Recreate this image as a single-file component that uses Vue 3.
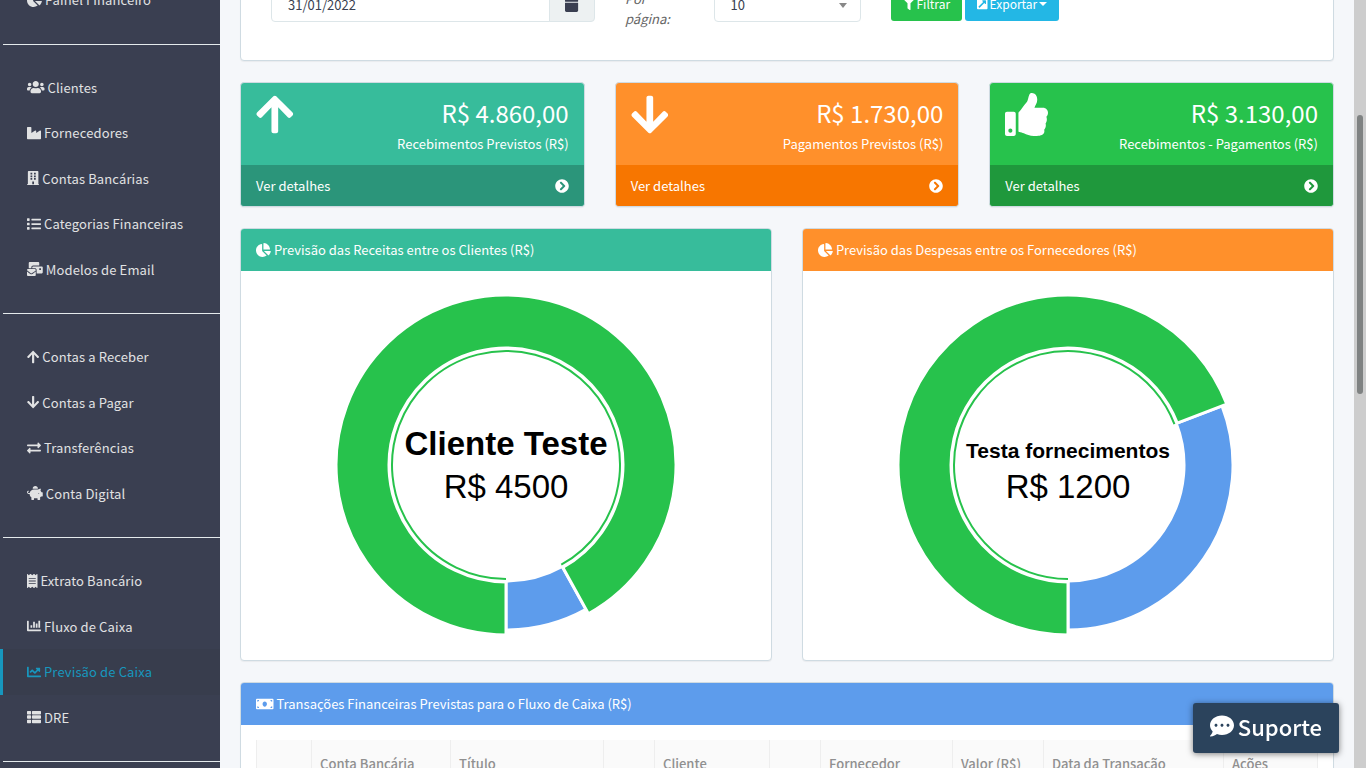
<template>
  <div class="app">
    <aside class="sidebar">
      <nav class="menu" aria-label="Menu">
        <ul v-for="(group, i) in menu" :key="i" class="menu-group">
          <li v-for="item in group" :key="item.label">
            <a href="#" class="menu-link" :class="{ active: item.active }">
              <Icon :name="item.icon" />
              <span>{{ item.label }}</span>
            </a>
          </li>
        </ul>
      </nav>
    </aside>

    <main class="content">
      <form class="card filters" @submit.prevent>
        <div class="date-group">
          <input v-model="endDate" class="date-input" type="text" aria-label="Data final" />
          <button class="date-button" type="button" aria-label="Abrir calendário">
            <Icon name="calendar" />
          </button>
        </div>
        <label class="per-page-label" for="per-page">Por página:</label>
        <div class="per-page">
          <select id="per-page" v-model="perPage">
            <option>10</option>
            <option>25</option>
            <option>50</option>
          </select>
        </div>
        <div class="actions">
          <button class="btn btn-success" type="submit"><Icon name="filter" />Filtrar</button>
          <button class="btn btn-info" type="button">
            <Icon name="external" />Exportar<span class="caret"></span>
          </button>
        </div>
      </form>

      <section class="summary">
        <article v-for="box in summary" :key="box.label" class="card box" :class="box.color">
          <div class="box-body">
            <Icon :name="box.icon" class="box-icon" />
            <div class="box-text">
              <div class="box-value">{{ box.value }}</div>
              <div class="box-label">{{ box.label }}</div>
            </div>
          </div>
          <a href="#" class="box-footer">
            <span>Ver detalhes</span>
            <Icon name="chevron" />
          </a>
        </article>
      </section>

      <section class="charts">
        <article v-for="chart in charts" :key="chart.title" class="card">
          <h2 class="card-header" :class="chart.color"><Icon name="pie" />{{ chart.title }}</h2>
          <div class="card-body">
            <svg class="donut" viewBox="-180 -179 360 359" role="img" :aria-label="chart.title">
              <path class="slice-rest" :d="slice(116, 165, 360 - chart.rest, 360)" />
              <path class="slice-main" :d="slice(117, 170, 0, 360 - chart.rest)" />
              <path class="slice-ring" :d="arc(114, 0, 360 - chart.rest)" />
              <text class="donut-name" :class="{ small: chart.small }" :y="chart.small ? -7 : -10">{{ chart.name }}</text>
              <text class="donut-value" y="33">{{ chart.value }}</text>
            </svg>
          </div>
        </article>
      </section>

      <section class="card">
        <h2 class="card-header blue">
          <Icon name="money" />Transações Financeiras Previstas para o Fluxo de Caixa (R$)
        </h2>
        <div class="card-body">
          <table class="transactions">
            <colgroup>
              <col v-for="(col, i) in columns" :key="i" :style="{ width: (col.width / totalWidth) * 100 + '%' }" />
            </colgroup>
            <thead>
              <tr>
                <th v-for="(col, i) in columns" :key="i" scope="col">{{ col.label }}</th>
              </tr>
            </thead>
          </table>
        </div>
      </section>
    </main>

    <div class="scrollbar"><div class="thumb"></div></div>

    <button class="support" type="button"><Icon name="comment" />Suporte</button>
  </div>
</template>

<script setup>
import { ref, h } from 'vue'

const endDate = ref('31/01/2022')
const perPage = ref('10')

// [largura do viewBox, caminho]
const icons = {
  pie: [544, 'M527.79 288H290.5l158.03 158.03c6.04 6.04 15.98 6.53 22.19.68 38.7-36.46 65.32-85.61 73.13-140.86 1.34-9.46-6.51-17.85-16.06-17.85zm-15.83-64.8C503.72 103.74 408.26 8.28 288.8.04 279.68-.59 272 7.1 272 16.24V240h223.77c9.14 0 16.82-7.68 16.19-16.8zM224 288V50.71c0-9.55-8.39-17.4-17.84-16.06C86.99 51.49-4.1 155.6.14 280.37 4.5 408.51 114.83 513.59 243.03 511.98c50.4-.63 96.97-16.87 135.26-44.03 7.9-5.6 8.42-17.23 1.57-24.08L224 288z'],
  users: [640, 'M96 224c35.3 0 64-28.7 64-64s-28.7-64-64-64-64 28.7-64 64 28.7 64 64 64zm448 0c35.3 0 64-28.7 64-64s-28.7-64-64-64-64 28.7-64 64 28.7 64 64 64zm32 32h-64c-17.6 0-33.5 7.1-45.1 18.6 40.3 22.1 68.9 62 75.1 109.4h66c17.7 0 32-14.3 32-32v-32c0-35.3-28.7-64-64-64zm-256 0c61.9 0 112-50.1 112-112S381.9 32 320 32 208 82.1 208 144s50.1 112 112 112zm76.8 32h-8.3c-20.8 10-43.9 16-68.5 16s-47.6-6-68.5-16h-8.3C179.6 288 128 339.6 128 403.2V432c0 26.5 21.5 48 48 48h288c26.5 0 48-21.5 48-48v-28.8c0-63.6-51.6-115.2-115.2-115.2zm-223.7-13.4C161.5 263.1 145.6 256 128 256H64c-35.3 0-64 28.7-64 64v32c0 17.7 14.3 32 32 32h65.9c6.3-47.4 34.9-87.3 75.2-109.4z'],
  industry: [512, 'M475.115 163.781L336 252.309v-68.28c0-18.916-20.931-30.399-36.885-20.248L160 252.309V56c0-13.255-10.745-24-24-24H24C10.745 32 0 42.745 0 56v400c0 13.255 10.745 24 24 24h464c13.255 0 24-10.745 24-24V184.029c0-18.917-20.931-30.399-36.885-20.248z'],
  building: [448, 'M436 480h-20V24c0-13.255-10.745-24-24-24H56C42.745 0 32 10.745 32 24v456H12c-6.627 0-12 5.373-12 12v20h448v-20c0-6.627-5.373-12-12-12zM128 64h64v64h-64zM256 64h64v64h-64zM128 160h64v64h-64zM256 160h64v64h-64zM128 256h64v64h-64zM256 256h64v64h-64zM192 384h64v96h-64z'],
  list: [512, 'M80 368H16a16 16 0 0 0-16 16v64a16 16 0 0 0 16 16h64a16 16 0 0 0 16-16v-64a16 16 0 0 0-16-16zm0-320H16A16 16 0 0 0 0 64v64a16 16 0 0 0 16 16h64a16 16 0 0 0 16-16V64a16 16 0 0 0-16-16zm0 160H16a16 16 0 0 0-16 16v64a16 16 0 0 0 16 16h64a16 16 0 0 0 16-16v-64a16 16 0 0 0-16-16zm416 176H176a16 16 0 0 0-16 16v32a16 16 0 0 0 16 16h320a16 16 0 0 0 16-16v-32a16 16 0 0 0-16-16zm0-320H176a16 16 0 0 0-16 16v32a16 16 0 0 0 16 16h320a16 16 0 0 0 16-16V80a16 16 0 0 0-16-16zm0 160H176a16 16 0 0 0-16 16v32a16 16 0 0 0 16 16h320a16 16 0 0 0 16-16v-32a16 16 0 0 0-16-16z'],
  mail: [576, 'M160 448c-25.6 0-51.2-22.4-64-32-64-44.8-83.2-60.8-96-70.4V480c0 17.67 14.33 32 32 32h256c17.67 0 32-14.33 32-32V345.6c-12.8 9.6-32 25.6-96 70.4-12.8 9.6-38.4 32-64 32zm128-192H32c-17.67 0-32 14.33-32 32v16c25.6 19.2 22.4 19.2 115.2 86.4 9.6 6.4 28.8 25.6 44.8 25.6s35.2-19.2 44.8-22.4c92.8-67.2 89.6-67.2 115.2-86.4V288c0-17.67-14.33-32-32-32zm256-96H224c-17.67 0-32 14.33-32 32v32h96c33.21 0 60.59 25.42 63.71 57.82l.29-.22V416h192c17.67 0 32-14.33 32-32V192c0-17.67-14.33-32-32-32zm-32 128h-64v-64h64v64zm-352-96c0-35.29 28.71-64 64-64h224V32c0-17.67-14.33-32-32-32H96C78.33 0 64 14.33 64 32v192h96v-32z'],
  up: [448, 'M34.9 289.5l-22.2-22.2c-9.4-9.4-9.4-24.6 0-33.9L207 39c9.4-9.4 24.6-9.4 33.9 0l194.3 194.3c9.4 9.4 9.4 24.6 0 33.9L413 289.4c-9.5 9.5-25 9.3-34.3-.4L264 168.6V456c0 13.3-10.7 24-24 24h-32c-13.3 0-24-10.7-24-24V168.6L69.2 289.1c-9.3 9.8-24.8 10-34.3.4z'],
  down: [448, 'M413.1 222.5l22.2 22.2c9.4 9.4 9.4 24.6 0 33.9L241 473c-9.4 9.4-24.6 9.4-33.9 0L12.7 278.6c-9.4-9.4-9.4-24.6 0-33.9l22.2-22.2c9.5-9.5 25-9.3 34.3.4L184 343.4V56c0-13.3 10.7-24 24-24h32c13.3 0 24 10.7 24 24v287.4l114.8-120.5c9.3-9.8 24.8-10 34.3-.4z'],
  exchange: [512, 'M0 168v-16c0-13.255 10.745-24 24-24h360V80c0-21.367 25.899-32.042 40.971-16.971l80 80c9.372 9.373 9.372 24.569 0 33.941l-80 80C409.956 271.982 384 261.456 384 240v-48H24c-13.255 0-24-10.745-24-24zm488 152H128v-48c0-21.314-25.862-32.08-40.971-16.971l-80 80c-9.372 9.373-9.372 24.569 0 33.941l80 80C102.057 463.997 128 453.437 128 432v-48h360c13.255 0 24-10.745 24-24v-16c0-13.255-10.745-24-24-24z'],
  piggy: [576, 'M560 224h-29.5c-8.8-20-21.6-37.7-37.4-52.5L512 96h-32c-29.4 0-55.4 13.5-73 34.3-7.6-1.1-15.1-2.3-23-2.3H256c-77.4 0-141.9 55-156.8 128H56c-14.8 0-26.5-13.5-23.5-28.8C34.7 215.8 45.4 208 57 208h1c3.3 0 6-2.7 6-6v-20c0-3.3-2.7-6-6-6-28.5 0-53.9 20.4-57.5 48.6C-3.9 258.8 22.7 288 56 288h40c0 52.2 25.4 98.1 64 127.3V496c0 8.8 7.2 16 16 16h64c8.8 0 16-7.2 16-16v-48h128v48c0 8.8 7.2 16 16 16h64c8.8 0 16-7.2 16-16v-80.7c11.8-8.9 22.3-19.4 31.3-31.3H560c8.8 0 16-7.2 16-16V240c0-8.8-7.2-16-16-16zm-128 64c-8.8 0-16-7.2-16-16s7.2-16 16-16 16 7.2 16 16-7.2 16-16 16zM256 96h128c5.4 0 10.7.4 15.9.8 0-.3.1-.5.1-.8 0-53-43-96-96-96s-96 43-96 96c0 2.1.5 4.1.6 6.2 15.2-3.9 31-6.2 47.4-6.2z'],
  receipt: [384, 'M358.4 3.2L320 48 265.6 3.2a15.9 15.9 0 0 0-19.2 0L192 48 137.6 3.2a15.9 15.9 0 0 0-19.2 0L64 48 25.6 3.2C15-4.7 0 2.8 0 16v480c0 13.2 15 20.7 25.6 12.8L64 464l54.4 44.8a15.9 15.9 0 0 0 19.2 0L192 464l54.4 44.8a15.9 15.9 0 0 0 19.2 0L320 464l38.4 44.8c10.5 7.9 25.6.4 25.6-12.8V16c0-13.2-15-20.7-25.6-12.8zM64 336h256v32H64zM64 240h256v32H64zM64 144h256v32H64z'],
  bars: [512, 'M332.8 320h38.4c6.4 0 12.8-6.4 12.8-12.8V172.8c0-6.4-6.4-12.8-12.8-12.8h-38.4c-6.4 0-12.8 6.4-12.8 12.8v134.4c0 6.4 6.4 12.8 12.8 12.8zm96 0h38.4c6.4 0 12.8-6.4 12.8-12.8V76.8c0-6.4-6.4-12.8-12.8-12.8h-38.4c-6.4 0-12.8 6.4-12.8 12.8v230.4c0 6.4 6.4 12.8 12.8 12.8zm-288 0h38.4c6.4 0 12.8-6.4 12.8-12.8v-70.4c0-6.4-6.4-12.8-12.8-12.8h-38.4c-6.4 0-12.8 6.4-12.8 12.8v70.4c0 6.4 6.4 12.8 12.8 12.8zm96 0h38.4c6.4 0 12.8-6.4 12.8-12.8V108.8c0-6.4-6.4-12.8-12.8-12.8h-38.4c-6.4 0-12.8 6.4-12.8 12.8v198.4c0 6.4 6.4 12.8 12.8 12.8zM496 384H64V80c0-8.84-7.16-16-16-16H16C7.16 64 0 71.16 0 80v336c0 17.67 14.33 32 32 32h464c8.84 0 16-7.16 16-16v-32c0-8.84-7.16-16-16-16z'],
  line: [512, 'M496 384H64V80c0-8.84-7.16-16-16-16H16C7.16 64 0 71.16 0 80v336c0 17.67 14.33 32 32 32h464c8.84 0 16-7.16 16-16v-32c0-8.84-7.16-16-16-16zM464 96H345.94c-21.38 0-32.09 25.85-16.97 40.97l32.4 32.4L288 242.75l-73.37-73.37c-12.5-12.5-32.76-12.5-45.25 0l-68.69 68.69c-6.25 6.25-6.25 16.38 0 22.63l22.62 22.62c6.25 6.25 16.38 6.25 22.63 0L192 237.25l73.37 73.37c12.5 12.5 32.76 12.5 45.25 0l96-96 32.4 32.4c15.12 15.12 40.97 4.41 40.97-16.97V112c.01-8.84-7.15-16-15.99-16z'],
  table: [512, 'M149.333 216v80c0 13.255-10.745 24-24 24H24c-13.255 0-24-10.745-24-24v-80c0-13.255 10.745-24 24-24h101.333c13.255 0 24 10.745 24 24zM0 376v80c0 13.255 10.745 24 24 24h101.333c13.255 0 24-10.745 24-24v-80c0-13.255-10.745-24-24-24H24c-13.255 0-24 10.745-24 24zM125.333 32H24C10.745 32 0 42.745 0 56v80c0 13.255 10.745 24 24 24h101.333c13.255 0 24-10.745 24-24V56c0-13.255-10.745-24-24-24zm80 448H488c13.255 0 24-10.745 24-24v-80c0-13.255-10.745-24-24-24H205.333c-13.255 0-24 10.745-24 24v80c0 13.255 10.745 24 24 24zm-24-424v80c0 13.255 10.745 24 24 24H488c13.255 0 24-10.745 24-24V56c0-13.255-10.745-24-24-24H205.333c-13.255 0-24 10.745-24 24zm24 264H488c13.255 0 24-10.745 24-24v-80c0-13.255-10.745-24-24-24H205.333c-13.255 0-24 10.745-24 24v80c0 13.255 10.745 24 24 24z'],
  thumb: [512, 'M104 224H24c-13.255 0-24 10.745-24 24v240c0 13.255 10.745 24 24 24h80c13.255 0 24-10.745 24-24V248c0-13.255-10.745-24-24-24zM64 472c-13.255 0-24-10.745-24-24s10.745-24 24-24 24 10.745 24 24-10.745 24-24 24zM384 81.452c0 42.416-25.97 66.208-33.277 94.548h101.723c33.397 0 59.397 27.746 59.553 58.098.084 17.938-7.546 37.249-19.439 49.197l-.11.11c9.836 23.337 8.237 56.037-9.308 79.469 8.681 25.895-.069 57.704-16.382 74.757 4.298 17.598 2.244 32.575-6.148 44.632C440.202 511.587 389.616 512 346.839 512l-2.845-.001c-48.287-.017-87.806-17.598-119.56-31.725-15.957-7.099-36.821-15.887-52.651-16.178-6.54-.12-11.783-5.457-11.783-11.998v-213.77c0-3.2 1.282-6.271 3.558-8.521 39.614-39.144 56.648-80.587 89.117-113.111 14.804-14.832 20.188-37.236 25.393-58.902C282.515 39.293 291.817 0 312 0c24 0 72 8 72 81.452z'],
  chevron: [512, 'M256 8c137 0 248 111 248 248S393 504 256 504 8 393 8 256 119 8 256 8zm113.9 231L234.4 103.5c-9.4-9.4-24.6-9.4-33.9 0l-17 17c-9.4 9.4-9.4 24.6 0 33.9L285.1 256 183.5 357.6c-9.4 9.4-9.4 24.6 0 33.9l17 17c9.4 9.4 24.6 9.4 33.9 0L369.9 273c9.4-9.4 9.4-24.6 0-34z'],
  money: [640, 'M608 64H32C14.33 64 0 78.33 0 96v320c0 17.67 14.33 32 32 32h576c17.67 0 32-14.33 32-32V96c0-17.67-14.33-32-32-32zM48 400v-64c35.35 0 64 28.65 64 64H48zm0-224v-64h64c0 35.35-28.65 64-64 64zm272 176c-44.19 0-80-42.99-80-96 0-53.02 35.82-96 80-96s80 42.98 80 96c0 53.03-35.83 96-80 96zm272 48h-64c0-35.35 28.65-64 64-64v64zm0-224c-35.35 0-64-28.65-64-64h64v64z'],
  comment: [512, 'M256 32C114.6 32 0 125.1 0 240c0 49.6 21.4 95 57 130.7C44.5 421.1 2.7 466 2.2 466.5c-2.2 2.3-2.8 5.7-1.5 8.7S4.8 480 8 480c66.3 0 116-31.8 140.6-51.4 32.7 12.3 69 19.4 107.4 19.4 141.4 0 256-93.1 256-208S397.4 32 256 32zM128 272c-17.7 0-32-14.3-32-32s14.3-32 32-32 32 14.3 32 32-14.3 32-32 32zm128 0c-17.7 0-32-14.3-32-32s14.3-32 32-32 32 14.3 32 32-14.3 32-32 32zm128 0c-17.7 0-32-14.3-32-32s14.3-32 32-32 32 14.3 32 32-14.3 32-32 32z'],
  filter: [512, 'M487.976 0H24.028C2.71 0-8.047 25.866 7.058 40.971L192 225.941V432c0 7.831 3.821 15.17 10.237 19.662l80 55.98C298.02 518.69 320 507.493 320 487.98V225.941l184.947-184.97C520.021 25.896 509.338 0 487.976 0z'],
  external: [448, 'M448 80v352c0 26.51-21.49 48-48 48H48c-26.51 0-48-21.49-48-48V80c0-26.51 21.49-48 48-48h352c26.51 0 48 21.49 48 48zm-88 16H248.029c-21.313 0-32.08 25.861-16.971 40.971l31.984 31.987L67.515 364.485c-4.686 4.686-4.686 12.284 0 16.971l31.029 31.029c4.687 4.686 12.285 4.686 16.971 0l195.526-195.526 31.988 31.991C358.058 264.977 384 254.425 384 232V120c0-13.255-10.745-24-24-24z'],
  calendar: [448, 'M12 192h424c6.6 0 12 5.4 12 12v260c0 26.5-21.5 48-48 48H48c-26.5 0-48-21.5-48-48V204c0-6.6 5.4-12 12-12zm436-44v-36c0-26.5-21.5-48-48-48h-48V12c0-6.6-5.4-12-12-12h-40c-6.6 0-12 5.4-12 12v52H160V12c0-6.6-5.4-12-12-12h-40c-6.6 0-12 5.4-12 12v52H48C21.5 64 0 85.5 0 112v36c0 6.6 5.4 12 12 12h424c6.6 0 12-5.4 12-12z']
}

const Icon = ({ name }) => {
  const [width, d] = icons[name]
  return h('svg', { class: 'icon', viewBox: `0 0 ${width} 512`, 'aria-hidden': 'true' }, [
    h('path', { d, fill: 'currentColor', 'fill-rule': 'evenodd' })
  ])
}
Icon.props = ['name']

const menu = [
  [{ icon: 'pie', label: 'Painel Financeiro' }],
  [
    { icon: 'users', label: 'Clientes' },
    { icon: 'industry', label: 'Fornecedores' },
    { icon: 'building', label: 'Contas Bancárias' },
    { icon: 'list', label: 'Categorias Financeiras' },
    { icon: 'mail', label: 'Modelos de Email' }
  ],
  [
    { icon: 'up', label: 'Contas a Receber' },
    { icon: 'down', label: 'Contas a Pagar' },
    { icon: 'exchange', label: 'Transferências' },
    { icon: 'piggy', label: 'Conta Digital' }
  ],
  [
    { icon: 'receipt', label: 'Extrato Bancário' },
    { icon: 'bars', label: 'Fluxo de Caixa' },
    { icon: 'line', label: 'Previsão de Caixa', active: true },
    { icon: 'table', label: 'DRE' }
  ],
  []
]

const summary = [
  { icon: 'up', value: 'R$ 4.860,00', label: 'Recebimentos Previstos (R$)', color: 'teal' },
  { icon: 'down', value: 'R$ 1.730,00', label: 'Pagamentos Previstos (R$)', color: 'orange' },
  { icon: 'thumb', value: 'R$ 3.130,00', label: 'Recebimentos - Pagamentos (R$)', color: 'green' }
]

// rest: ângulo, em graus, da fatia menor
const charts = [
  { title: 'Previsão das Receitas entre os Clientes (R$)', color: 'teal', name: 'Cliente Teste', value: 'R$ 4500', rest: 29 },
  { title: 'Previsão das Despesas entre os Fornecedores (R$)', color: 'orange', name: 'Testa fornecimentos', value: 'R$ 1200', rest: 111, small: true }
]

const columns = [
  { label: '', width: 55 },
  { label: 'Conta Bancária', width: 139 },
  { label: 'Título', width: 153 },
  { label: '', width: 51 },
  { label: 'Cliente', width: 115 },
  { label: '', width: 51 },
  { label: 'Fornecedor', width: 132 },
  { label: 'Valor (R$)', width: 91 },
  { label: 'Data da Transação', width: 180 },
  { label: 'Ações', width: 94 }
]
const totalWidth = columns.reduce((sum, col) => sum + col.width, 0)

// os ângulos partem de baixo, no sentido horário
const point = (r, deg) => {
  const a = (deg * Math.PI) / 180
  return `${(-r * Math.sin(a)).toFixed(2)} ${(r * Math.cos(a)).toFixed(2)}`
}

const arc = (r, from, to) =>
  `M${point(r, from)}A${r} ${r} 0 ${to - from > 180 ? 1 : 0} 1 ${point(r, to)}`

const slice = (inner, outer, from, to) =>
  `${arc(outer, from, to)}L${point(inner, to)}A${inner} ${inner} 0 ${to - from > 180 ? 1 : 0} 0 ${point(inner, from)}Z`
</script>

<style>
body {
  margin: 0;
  overflow: hidden;
}
</style>

<style scoped>
.app {
  display: flex;
  height: 100vh;
  overflow: hidden;
  background: #f5f7fa;
  color: #656565;
  font-family: "Source Sans Pro", "Noto Sans CJK SC", "Noto Sans", sans-serif;
  font-size: 13px;
  line-height: 20px;
}

* {
  box-sizing: border-box;
}

button,
input,
select {
  font: inherit;
}

.icon {
  display: block;
  flex: none;
  height: 1em;
}

/* menu lateral */
.sidebar {
  flex: none;
  width: 220px;
  background: #3a3f51;
  overflow: hidden;
}

.menu {
  margin-top: -23px;
}

.menu-group {
  margin: 0;
  padding: 0;
  list-style: none;
}

.menu-group + .menu-group {
  margin: 21px 0 0 3px;
  padding-top: 20px;
  border-top: 1px solid #e4eaec;
}

.menu-group + .menu-group .menu-link {
  margin-left: -3px;
}

.menu-link {
  display: flex;
  align-items: center;
  gap: 3px;
  padding: 13px 24px;
  border-left: 3px solid transparent;
  color: #e1e2e3;
  line-height: 1.5;
  letter-spacing: 0.01em;
  text-decoration: none;
  white-space: nowrap;
}

.menu-link .icon {
  height: 14px;
}

.menu-link.active {
  border-left-color: #1797be;
  background: #383d4d;
  color: #1797be;
}

/* conteúdo */
.content {
  flex: 1;
  min-width: 0;
  padding: 0 20px;
}

.card {
  margin-bottom: 21px;
  border: 1px solid #cfdbe2;
  border-radius: 4px;
  background: #fff;
  box-shadow: 0 1px 1px rgba(0, 0, 0, 0.05);
  overflow: hidden;
}

.filters {
  display: grid;
  grid-template-columns: repeat(12, 1fr);
  column-gap: 30px;
  align-items: start;
  margin-top: -30px;
  padding: 16px 30px 31px;
}

.date-group {
  grid-column: span 4;
  display: flex;
  height: 35px;
}

.date-input {
  flex: 1;
  min-width: 0;
  padding: 6px 16px;
  border: 1px solid #dde6e9;
  border-radius: 4px 0 0 4px;
  color: #3a3f51;
}

.date-button {
  display: flex;
  justify-content: center;
  align-items: center;
  width: 46px;
  margin-left: -1px;
  padding: 0;
  border: 1px solid #dde6e9;
  border-radius: 0 4px 4px 0;
  background: #edf1f2;
  color: #3a3f51;
  font-size: 15px;
}

.per-page-label {
  padding-top: 2px;
  font-style: italic;
}

.per-page {
  grid-column: span 2;
  display: flex;
  position: relative;
}

.per-page select {
  width: 100%;
  height: 35px;
  padding: 0 16px;
  border: 1px solid #dde6e9;
  border-radius: 4px;
  background: #fff;
  color: #3a3f51;
  appearance: none;
}

.per-page::after {
  content: "";
  position: absolute;
  top: 16px;
  right: 14px;
  border: 4px solid transparent;
  border-top: 5px solid #888;
  border-bottom: 0;
}

.actions {
  grid-column: span 5;
  display: flex;
  gap: 3px;
}

.btn {
  display: flex;
  align-items: center;
  gap: 2px;
  height: 34px;
  padding: 0 12px;
  border: 0;
  border-radius: 3px;
  color: #fff;
  font-size: 12px;
}

.btn-success {
  background: #27c24c;
}

.btn-info {
  background: #23b7e5;
}

.caret {
  border: 4px solid transparent;
  border-top-color: #fff;
  border-bottom: 0;
}

.teal {
  background: #37bc9b;
}

.orange {
  background: #ff902b;
}

.green {
  background: #27c24c;
}

.blue {
  background: #5d9cec;
}

.summary {
  display: grid;
  grid-template-columns: repeat(3, 1fr);
  column-gap: 30px;
}

.box {
  color: #fff;
}

.box-body {
  display: flex;
  justify-content: space-between;
  height: 82px;
  padding: 10px 15px;
}

.box-icon {
  font-size: 43px;
}

.box-text {
  text-align: right;
}

.box-value {
  margin-bottom: 2px;
  font-size: 24px;
  line-height: 39px;
}

.box-footer {
  display: flex;
  justify-content: space-between;
  align-items: center;
  height: 41px;
  padding: 0 15px;
  color: #fff;
  text-decoration: none;
}

.box-footer .icon {
  font-size: 14px;
}

.teal .box-footer {
  background: #2b957a;
}

.orange .box-footer {
  background: #f77600;
}

.green .box-footer {
  background: #1f983c;
}

.charts {
  display: grid;
  grid-template-columns: repeat(2, 1fr);
  column-gap: 30px;
}

.card-header {
  display: flex;
  align-items: center;
  gap: 3px;
  height: 42px;
  margin: 0;
  padding: 0 15px;
  color: #fff;
  font-size: 13px;
  font-weight: 400;
}

.card-header .icon {
  font-size: 14px;
}

.card-body {
  padding: 15px;
}

.donut {
  display: block;
  width: 100%;
  height: 359px;
  font-family: "Liberation Sans", Arial, sans-serif;
}

.slice-main,
.slice-rest {
  stroke: #fff;
  stroke-width: 3px;
}

.slice-main {
  fill: #27c24c;
}

.slice-rest {
  fill: #5d9cec;
}

.slice-ring {
  fill: none;
  stroke: #27c24c;
  stroke-width: 2px;
}

.donut-name,
.donut-value {
  fill: #000;
  font-size: 33px;
  text-anchor: middle;
}

.donut-name {
  font-weight: 700;
}

.donut-name.small {
  font-size: 21px;
}

.transactions {
  width: 100%;
  border-collapse: collapse;
  table-layout: fixed;
}

.transactions th {
  height: 46px;
  padding: 2px 8px 0;
  border: 1px solid #eee;
  border-top: 0;
  background: #fafafa;
  color: #909090;
  font-weight: 500;
  text-align: left;
  white-space: nowrap;
}

/* barra de rolagem */
.scrollbar {
  flex: none;
  width: 12px;
  padding: 115px 3px 0;
  background: #cdcdcd;
}

.thumb {
  height: 279px;
  border-radius: 3px;
  background: #7f8282;
}

.support {
  position: fixed;
  right: 27px;
  bottom: 15px;
  display: flex;
  align-items: center;
  gap: 4px;
  height: 50px;
  padding: 0 17px 4px;
  border: 0;
  border-radius: 3px;
  background: #2b435c;
  box-shadow: 0 1px 6px rgba(0, 0, 0, 0.5);
  color: #fff;
  font-size: 22px;
  font-weight: 500;
}

.support .icon {
  font-size: 24px;
}
</style>
